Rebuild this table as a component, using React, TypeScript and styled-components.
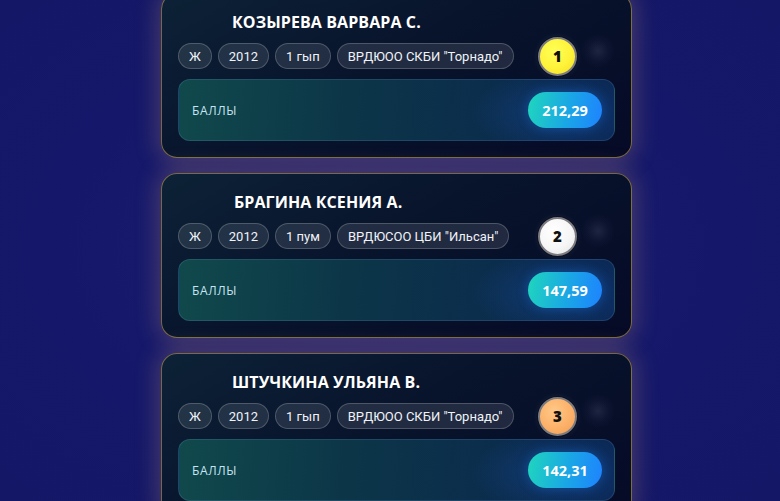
import React from "react";
import styled, { createGlobalStyle } from "styled-components";

const Global = createGlobalStyle`
  html, body { margin: 0; padding: 0; }
  body {
    background: #16196b;
    font-family: "Open Sans", "Noto Sans", sans-serif;
    overflow: hidden;
  }
`;

const Page = styled.div`
  width: 780px;
  height: 501px;
  overflow: hidden;
  background: radial-gradient(ellipse at 50% 50%, #1a1c72 0%, #15186a 60%, #141766 100%);
`;

const List = styled.div`
  display: flex;
  flex-direction: column;
  align-items: center;
  gap: 15px;
  margin-top: -7px;
  padding-left: 13px;
`;

const Card = styled.div`
  box-sizing: border-box;
  width: 471px;
  height: 165px;
  border-radius: 16px;
  border: 1px solid rgba(200, 165, 80, 0.6);
  background: linear-gradient(150deg, #0d2236 0%, #08142c 45%, #060a26 100%);
  box-shadow: 0 0 22px 4px rgba(200, 150, 110, 0.28);
  padding: 17px 16px 16px 16px;
  display: flex;
  flex-direction: column;
`;

const Name = styled.div<{ $indent: number }>`
  color: #ffffff;
  font-weight: 700;
  font-size: 16px;
  line-height: 22px;
  padding-left: ${(p) => p.$indent}px;
  letter-spacing: 0.1px;
`;

const Row = styled.div`
  display: flex;
  align-items: center;
  margin-top: 10px;
  height: 26px;
`;

const Chips = styled.div`
  display: flex;
  gap: 6px;
`;

const Chip = styled.span`
  box-sizing: border-box;
  height: 26px;
  padding: 0 10px;
  display: inline-flex;
  align-items: center;
  border-radius: 13px;
  background: rgba(255, 255, 255, 0.1);
  border: 1px solid rgba(255, 255, 255, 0.2);
  color: #f0f3f8;
  font-family: Roboto, "Open Sans", sans-serif;
  font-size: 13px;
  white-space: nowrap;
`;

const medalColors: Record<number, string> = {
  1: "radial-gradient(circle at 40% 35%, #ffff55 0%, #fff23a 55%, #f2dc1e 100%)",
  2: "radial-gradient(circle at 40% 35%, #ffffff 0%, #f6f6f6 55%, #e3e3e3 100%)",
  3: "radial-gradient(circle at 40% 35%, #ffc887 0%, #fcb169 55%, #f19d52 100%)",
};

const Medal = styled.div<{ $place: number }>`
  box-sizing: border-box;
  margin-left: auto;
  width: 39px;
  height: 39px;
  flex: none;
  border-radius: 50%;
  background: ${(p) => medalColors[p.$place]};
  border: 2px solid #7b7b80;
  box-shadow: 0 0 0 1px rgba(0, 0, 0, 0.35), 0 0 6px rgba(255, 255, 255, 0.1);
  display: flex;
  align-items: center;
  justify-content: center;
  color: #101010;
  font-weight: 800;
  font-size: 15px;
`;

const Glow = styled.div`
  width: 34px;
  height: 34px;
  flex: none;
  margin-left: 4px;
  border-radius: 50%;
  background: radial-gradient(circle, rgba(110, 110, 150, 0.22) 0%, rgba(60, 60, 100, 0.1) 45%, rgba(0, 0, 0, 0) 72%);
  transform: translateY(-5px);
`;

const ScoreBox = styled.div`
  box-sizing: border-box;
  margin-top: 10px;
  height: 62px;
  border-radius: 12px;
  border: 1px solid rgba(120, 170, 220, 0.18);
  background: radial-gradient(ellipse 130px 60px at 88% 55%, rgba(30, 90, 190, 0.35), rgba(0,0,0,0) 70%),
    linear-gradient(95deg, #10494c 0%, #0c3548 40%, #0a2651 100%);
  display: flex;
  align-items: center;
  justify-content: space-between;
  padding: 0 12px 0 13px;
`;

const Label = styled.span`
  color: #c6e4f2;
  font-size: 12px;
  letter-spacing: 0.6px;
`;

const Score = styled.span`
  box-sizing: border-box;
  height: 36px;
  min-width: 74px;
  padding: 0 12px;
  border-radius: 18px;
  background: linear-gradient(100deg, #1fd6bd 0%, #1aa6e6 55%, #1e82ff 100%);
  box-shadow: 0 0 12px rgba(30, 130, 255, 0.35);
  color: #ffffff;
  font-weight: 700;
  font-size: 14.5px;
  display: inline-flex;
  align-items: center;
  justify-content: center;
`;

type Athlete = {
  name: string;
  indent: number;
  chips: string[];
  place: number;
  score: string;
};

const athletes: Athlete[] = [
  { name: "КОЗЫРЕВА ВАРВАРА С.", indent: 54, chips: ["Ж", "2012", "1 гып", "ВРДЮОО СКБИ \"Торнадо\""], place: 1, score: "212,29" },
  { name: "БРАГИНА КСЕНИЯ А.", indent: 56, chips: ["Ж", "2012", "1 пум", "ВРДЮСОО ЦБИ \"Ильсан\""], place: 2, score: "147,59" },
  { name: "ШТУЧКИНА УЛЬЯНА В.", indent: 54, chips: ["Ж", "2012", "1 гып", "ВРДЮОО СКБИ \"Торнадо\""], place: 3, score: "142,31" },
];

export default function App() {
  return (
    <Page>
      <Global />
      <List>
        {athletes.map((a) => (
          <Card key={a.name}>
            <Name $indent={a.indent}>{a.name}</Name>
            <Row>
              <Chips>
                {a.chips.map((c) => (
                  <Chip key={c}>{c}</Chip>
                ))}
              </Chips>
              <Medal $place={a.place}>{a.place}</Medal>
              <Glow />
            </Row>
            <ScoreBox>
              <Label>БАЛЛЫ</Label>
              <Score>{a.score}</Score>
            </ScoreBox>
          </Card>
        ))}
      </List>
    </Page>
  );
}
